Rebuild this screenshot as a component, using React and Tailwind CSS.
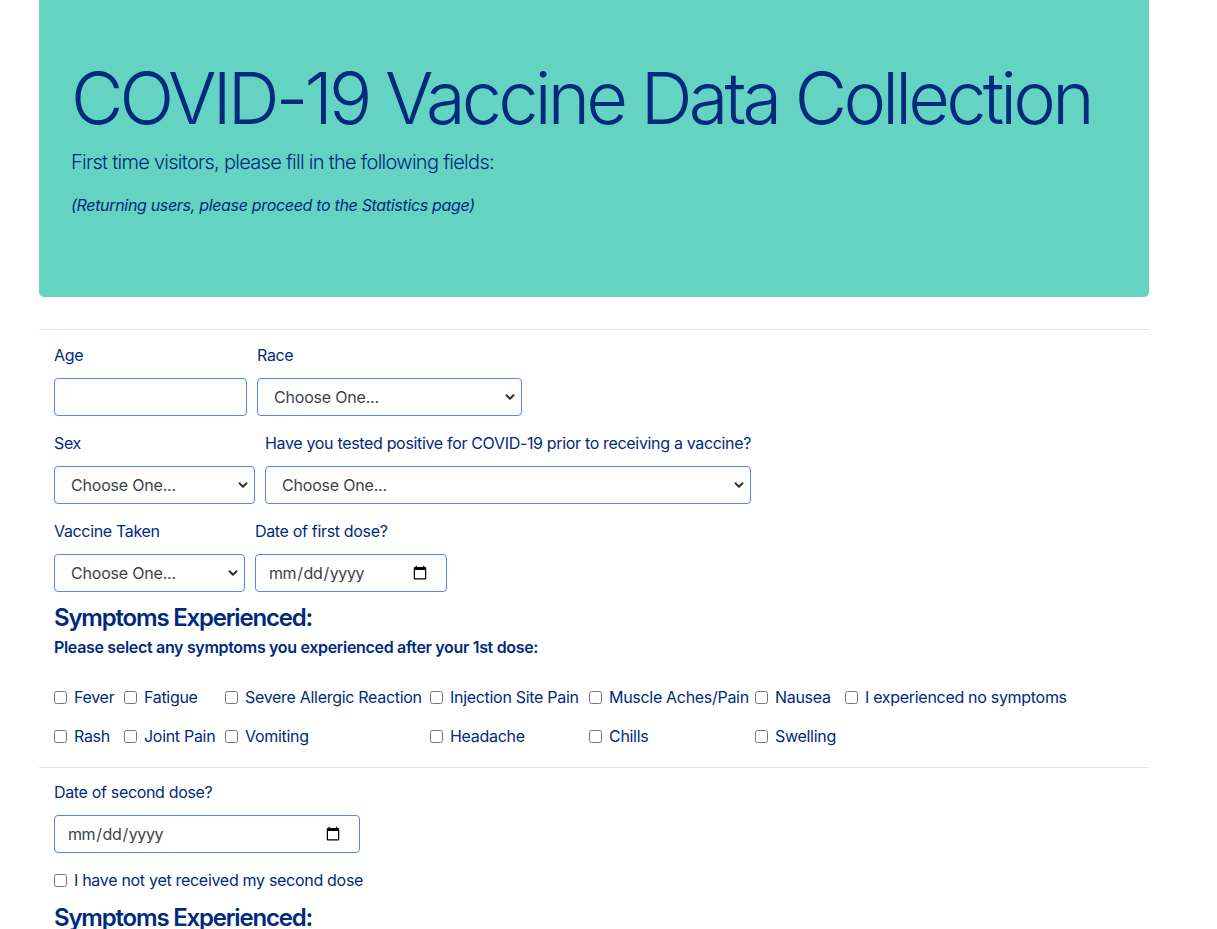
import React from "react";

const navy = "text-[#012a7d]";

function Chevron() {
    return (
        <svg width="10" height="10" viewBox="0 0 10 10" className="pointer-events-none absolute right-[7px] top-1/2 -translate-y-1/2">
            <path d="M1.5 3.2 L5 6.8 L8.5 3.2" fill="none" stroke="#333" strokeWidth="2" strokeLinecap="round" strokeLinejoin="round" />
        </svg>
    );
}

function Field({ label, width, children }) {
    return (
        <div className="flex flex-col" style={{ width }}>
            <label className={`${navy} text-[16px] leading-6 tracking-[-0.33px] mb-[11px] whitespace-nowrap`}>{label}</label>
            {children}
        </div>
    );
}

function SelectBox({ width }) {
    return (
        <div className="relative" style={{ width }}>
            <select className="w-full h-[38px] appearance-none rounded-[4px] border border-[#4a89e8] bg-white pl-4 pr-6 text-[16px] tracking-[-0.2px] text-[#3d4247] outline-none">
                <option>Choose One...</option>
            </select>
            <Chevron />
        </div>
    );
}

function DateBox({ width }) {
    return (
        <input
            type="date"
            className="h-[38px] rounded-[4px] border border-[#4a89e8] bg-white pl-3 pr-4 text-[16px] tracking-[-0.4px] text-[#3d4247] outline-none"
            style={{ width }}
        />
    );
}

function Check({ label }) {
    return (
        <label className={`flex items-center gap-[7px] ${navy} text-[16px] leading-6 tracking-[-0.3px] whitespace-nowrap`}>
            <input type="checkbox" className="m-0 h-[13px] w-[13px] shrink-0" />
            {label}
        </label>
    );
}

const row1 = ["Fever", "Fatigue", "Severe Allergic Reaction", "Injection Site Pain", "Muscle Aches/Pain", "Nausea", "I experienced no symptoms"];
const row2 = ["Rash", "Joint Pain", "Vomiting", "Headache", "Chills", "Swelling"];

export default function App() {
    return (
        <div className="min-h-[929px] bg-white font-['Inter','Liberation_Sans',sans-serif] antialiased">
            <div className="ml-[39px] w-[1110px]">
                <div className="rounded-b-[5px] bg-[#64d3c2] px-8 pt-[55px] pb-[80px]">
                    <h1 className={`${navy} text-[72px] font-light leading-[86px] tracking-[-3.8px] whitespace-nowrap`}>
                        COVID-19 Vaccine Data Collection
                    </h1>
                    <p className={`${navy} mt-[6px] text-[20px] font-light leading-[30px] tracking-[-0.72px]`}>
                        First time visitors, please fill in the following fields:
                    </p>
                    <p className={`${navy} mt-4 text-[16px] italic leading-6 tracking-[-0.32px]`}>
                        (Returning users, please proceed to the Statistics page)
                    </p>
                </div>

                <hr className="mt-[32px] border-t border-[#e3e3e3]" />

                <form className="px-[15px] pt-[13px]">
                    <div className="flex gap-[10px]">
                        <Field label="Age" width="193px">
                            <input type="text" className="h-[38px] w-full rounded-[4px] border border-[#4a89e8] bg-white px-3 outline-none" />
                        </Field>
                        <Field label="Race" width="265px">
                            <SelectBox width="265px" />
                        </Field>
                    </div>

                    <div className="mt-[15px] flex gap-[10px]">
                        <Field label="Sex" width="201px">
                            <SelectBox width="201px" />
                        </Field>
                        <Field label="Have you tested positive for COVID-19 prior to receiving a vaccine?" width="486px">
                            <SelectBox width="486px" />
                        </Field>
                    </div>

                    <div className="mt-[15px] flex gap-[10px]">
                        <Field label="Vaccine Taken" width="191px">
                            <SelectBox width="191px" />
                        </Field>
                        <Field label="Date of first dose?" width="192px">
                            <DateBox width="192px" />
                        </Field>
                    </div>

                    <h4 className={`${navy} mt-[11px] text-[24px] font-semibold leading-[29px] tracking-[-1.2px]`}>Symptoms Experienced:</h4>
                    <p className={`${navy} mt-[3px] text-[16px] font-semibold leading-6 tracking-[-0.32px]`}>
                        Please select any symptoms you experienced after your 1st dose:
                    </p>

                    <div className="mt-[26px] grid grid-cols-[70px_101px_205px_159px_166px_90px_auto] gap-y-[15px]">
                        {row1.map((s) => (
                            <Check key={s} label={s} />
                        ))}
                        {row2.map((s) => (
                            <Check key={s} label={s} />
                        ))}
                    </div>
                </form>

                <hr className="mt-[19px] border-t border-[#e3e3e3]" />

                <div className="px-[15px] pt-[12px]">
                    <Field label="Date of second dose?" width="306px">
                        <DateBox width="306px" />
                    </Field>
                    <div className="mt-[15px]">
                        <Check label="I have not yet received my second dose" />
                    </div>
                    <h4 className={`${navy} mt-[11px] text-[24px] font-semibold leading-[29px] tracking-[-1.2px]`}>Symptoms Experienced:</h4>
                </div>
            </div>
        </div>
    );
}
